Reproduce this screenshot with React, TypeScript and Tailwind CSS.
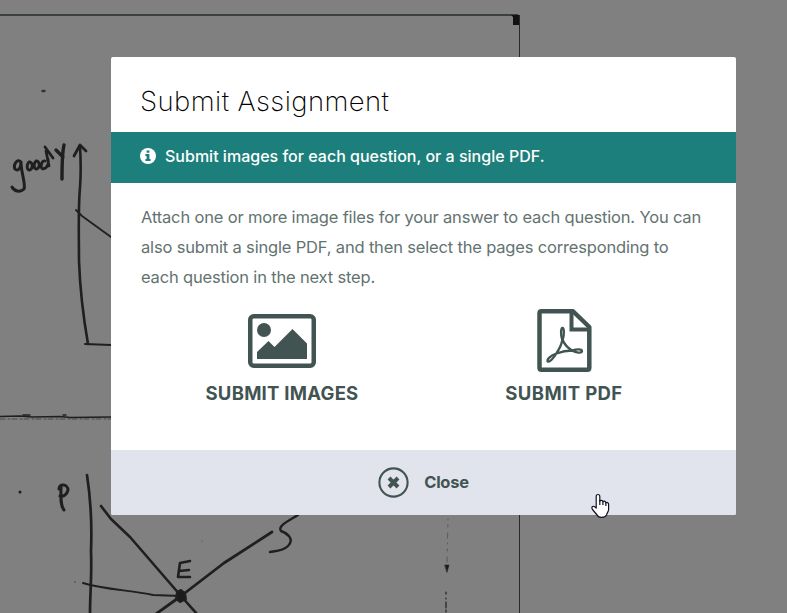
function ScannedPage() {
  return (
    <svg className="absolute inset-0 h-full w-full" viewBox="0 0 787 613" fill="none" stroke="#1f1f1f" strokeLinecap="round" strokeLinejoin="round">
      {/* page frame */}
      <path d="M0 15H518" stroke="#3a403e" strokeWidth="2" strokeLinecap="butt" />
      <path d="M511 15H520V25H513V17Z" fill="#131313" stroke="none" />
      <path d="M519.5 15V613" strokeWidth="1" stroke="#2a2a2a" strokeLinecap="butt" />
      {/* upper graph */}
      <path d="M42.500 91h2" strokeWidth="2.400" stroke="#333" />
      <path d="M80 146C81 163 81 174 80 188C78 208 79 239 79 261C80 289 84 321 88 344" strokeWidth="2.6" />
      <path d="M74 156L80 145L86 151" strokeWidth="2.8" />
      <path d="M76 210L82 216L111 237" strokeWidth="1.8" />
      <path d="M85 344L111 345" strokeWidth="2" />
      <path d="M21 162C17 158 13 165 15 169C18 172 21 168 21 162C21 173 26 184 24 189C20 193 14 191 12 187" strokeWidth="3" />
      <path d="M29 162C26 165 27 171 30 170C34 168 32 161 29 162M36 161C33 164 34 170 37 169C41 167 39 160 36 161M45 161C41 160 40 168 43 169C48 168 49 163 48 159M45 147L53 158M46 151L49 166" strokeWidth="2.8" />
      <path d="M56 150L63 157M64 145C62 154 62 165 62 179" strokeWidth="3.4" />
      {/* divider */}
      <path d="M0 416.5L20 416L32 417L60 416.5L70 417.5L111 417" strokeWidth="1.6" />
      <path d="M0 419H111" strokeWidth=".8" strokeDasharray="5 3 2 2" stroke="#3b3b3b" />
      <path d="M23 415h7M63 415h3" strokeWidth="1.3" />
      {/* lower graph */}
      <path d="M87 475C91 501 92 526 91 551C92 575 90 594 90 613" strokeWidth="2.7" />
      <path d="M101 506L111 519L130 537L181 596L197 614" strokeWidth="2.6" />
      <path d="M83 583C105 590 132 590 153 595L181 596" strokeWidth="2" />
      <path d="M156 614L181 596L224 563L272 532" strokeWidth="2.8" />
      <path d="M177 592l4-2l4 3l1 6l-6 3l-4-3z" fill="#1b1b1b" strokeWidth="2" />
      <path d="M59 489C59 483 68 484 68 490C67 495 63 497 60 496M61 487C61 497 60 505 64 510" strokeWidth="3" />
      <path d="M180 563L178 577L190 577M180 563L190 561M179 571L189 570" strokeWidth="2.6" />
      <path d="M298 515C290 520 277 526 281 531C287 533 295 539 288 546C283 551 276 551 270 552" strokeWidth="2.4" />
      <circle cx="20" cy="492" r="1.5" fill="#1b1b1b" stroke="none" />
      <circle cx="75" cy="582" r=".7" fill="#333" stroke="none" />
      <circle cx="202" cy="541" r=".6" fill="#444" stroke="none" />
      <path d="M448 519L447 564" strokeWidth=".9" stroke="#555" strokeDasharray="1 5 2 6 5 5" />
      <path d="M445 565h4l-2 7z" fill="#1b1b1b" strokeWidth=".6" />
      <path d="M446 592v21" strokeWidth="1.2" strokeDasharray="2 4 1 3 6 2" />
    </svg>
  );
}

function InfoIcon() {
  return (
    <svg className="h-4 w-4 shrink-0" viewBox="0 0 16 16">
      <circle cx="8" cy="8" r="8" fill="#fff" />
      <path d="M6.6 2.6h2.8v2.2H6.6zM5.4 6h4v5h1.2v2H5.4v-2h1.2V8H5.4z" fill="#1d7f7b" />
    </svg>
  );
}

function ImageIcon() {
  return (
    <svg className="h-[54px] w-[68px]" viewBox="0 0 68 54" fill="#425452">
      <rect x="2.25" y="2.25" width="63.5" height="49.5" rx="3.5" fill="none" stroke="#425452" strokeWidth="4.5" />
      <circle cx="16" cy="16" r="7" />
      <path d="M9 45v-7L20.500 27l6 6L44.500 15 59 29.500V45z" />
    </svg>
  );
}

function PdfIcon() {
  return (
    <svg className="h-[63px] w-[55px]" viewBox="0 0 55 63" fill="none" stroke="#425452">
      <path d="M4.500 2.250H36L52.300 18V58.700Q52.300 60.700 50.300 60.700H4.500Q2.500 60.700 2.500 58.700V4.250Q2.500 2.250 4.500 2.250Z" strokeWidth="4.500" strokeLinejoin="round" />
      <path d="M34.500 3V20.500H52" strokeWidth="4" />
      <path d="M25.300 31C23.400 26 23.800 19 25.500 19C27.300 19 27.300 26 25.700 31C27.500 35.500 31 39 35 41.500C40 40 45 40 45 42.300C44.500 44.500 39 43.800 35 41.500C29.500 41.500 24 42.800 19.300 44.500C17 48.500 12.500 53.800 10.700 52.500C9.500 50.500 14 46.300 19.300 44.500C22 40.500 24.500 36 25.300 31Z" strokeWidth="2.300" strokeLinejoin="round" />
    </svg>
  );
}

function CloseIcon() {
  return (
    <svg className="h-[31px] w-[31px]" viewBox="0 0 31 31" fill="none" stroke="#425452">
      <circle cx="15.500" cy="15.500" r="14.100" strokeWidth="2.100" />
      <path d="M11 11L20 20M20 11L11 20" strokeWidth="4" />
    </svg>
  );
}

function HandCursor() {
  return (
    <svg className="absolute left-[591px] top-[493px] h-[26px] w-[19px]" viewBox="0 0 19 26" fill="#fff" stroke="#111122" strokeWidth="1.200" strokeLinejoin="round">
      <path d="M5.200 15V3.500C5.200 .8 8.800 .8 8.800 3.500V8C10 6.700 11.700 7.300 11.900 8.700C13.200 7.700 14.700 8.400 14.900 9.800C16.200 9 17.600 9.800 17.600 11.300V16.500C17.600 18.500 16 20 15.500 22C14 25 7.500 25 6.500 22.500L1.500 16.500C-.2 13.500 2.500 12.500 4 14Z" />
      <path d="M8.800 7v5M11.900 8.500V12M14.900 9.500V13" fill="none" />
    </svg>
  );
}

export default function App() {
  return (
    <div className="relative h-[613px] w-[787px] overflow-hidden bg-[#808080] pl-[111px] pt-[57px] font-['Inter','Liberation_Sans',sans-serif]">
      <ScannedPage />
      <section className="relative flex h-[458px] w-[625px] flex-col overflow-hidden rounded-[2px] bg-white text-[#425452]">
        <header className="flex h-[75px] shrink-0 items-center pl-[29px] pt-[15px]">
          <h1 className="whitespace-nowrap text-[27.500px] font-extralight leading-none tracking-[0.410px] text-black">Submit Assignment</h1>
        </header>
        <div className="flex h-[51px] shrink-0 items-center gap-[9px] bg-[#1d7f7b] pb-[3px] pl-[29px] text-white">
          <InfoIcon />
          <span className="whitespace-nowrap text-[16px] font-medium tracking-[0.010px]">Submit images for each question, or a single PDF.</span>
        </div>
        <p className="mt-[19px] whitespace-nowrap pl-[30px] text-[16.500px] leading-[30px] tracking-[-0.170px] text-[#637370]">
          <span className="block">Attach one or more image files for your answer to each question. You can</span>
          <span className="block">also submit a single PDF, and then select the pages corresponding to</span>
          <span className="block">each question in the next step.</span>
        </p>
        <div className="flex pl-[30px] pr-[31px] pt-[17px]">
          <button className="flex w-[282px] flex-col items-center">
            <span className="flex h-[63px] items-center"><ImageIcon /></span>
            <span className="mt-[8px] whitespace-nowrap text-[18.500px] font-bold leading-[26px] tracking-[0.250px]">SUBMIT IMAGES</span>
          </button>
          <button className="flex w-[282px] flex-col items-center">
            <PdfIcon />
            <span className="mt-[8px] whitespace-nowrap text-[18.500px] font-bold leading-[26px] tracking-[0.400px]">SUBMIT PDF</span>
          </button>
        </div>
        <button className="mt-auto flex h-[65px] w-full items-center justify-center gap-[15px] bg-[#e1e4ec]">
          <CloseIcon />
          <span className="text-[16.500px] font-bold tracking-[-0.250px]">Close</span>
        </button>
      </section>
      <HandCursor />
    </div>
  );
}
